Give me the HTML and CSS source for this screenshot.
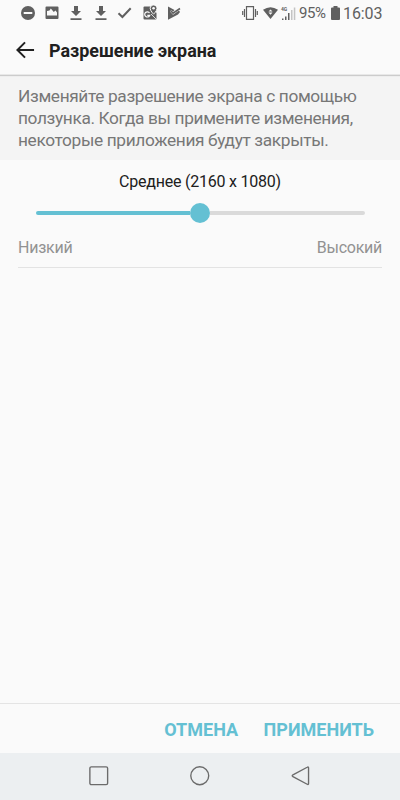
FILE: index.html
```html
<!DOCTYPE html>
<html lang="ru">
<head>
<meta charset="utf-8">
<title>Разрешение экрана</title>
<link rel="stylesheet" href="styles.css">
</head>
<body>
<div class="screen">
  <div class="status">
    <div class="notifications">
      <svg viewBox="0 0 24 24"><circle cx="12" cy="12" r="7"/><path class="cut" d="M7.7 11h8.6v2H7.7z"/></svg>
      <svg viewBox="0 0 24 24"><path fill-rule="evenodd" d="M6.500 5.500h11q1 0 1 1V17q0 1-1 1h-11q-1 0-1-1V6.500q0-1 1-1zM7 14.500h10v-3l-1.500-2-1.700 1.400-3-3.400-1.300 2-2.500.500z"/></svg>
      <svg viewBox="0 0 24 24"><path d="M10 5h4v5h3L12 15 7 10h3zM6.500 17.200h11v1.700h-11z"/></svg>
      <svg viewBox="0 0 24 24"><path d="M10 5h4v5h3L12 15 7 10h3zM6.500 17.200h11v1.700h-11z"/></svg>
      <svg viewBox="0 0 24 24"><path class="check" d="m5.500 12.200 3.900 3.800 8.300-8.800"/></svg>
      <svg viewBox="0 0 24 24"><path d="M6.500 5.500h7L18.500 12v5.500q0 1-1 1h-11q-1 0-1-1v-11q0-1 1-1z"/><path class="road" d="m13 13 5 5"/><path class="pin" d="M15.600 4c-2 0-3.400 1.500-3.400 3.400 0 2.400 3.400 5.800 3.400 5.800S19 9.800 19 7.400C19 5.500 17.600 4 15.600 4z"/><circle class="cut" cx="15.600" cy="7.300" r="1.300"/><path class="g" d="M11.500 12a2.600 2.600 0 1 0 .2 2.400H9.300"/></svg>
      <svg viewBox="0 0 24 24"><path d="M6 5.500 12.500 9 11 10.700 9.500 9 8 10.500l3 3.300L17 9.500l1 1.500-2 2.500L6 18.800z"/><path class="playmark" d="m8.800 9.800 2.200 2.400 7-4.700"/></svg>
    </div>
    <div class="system">
      <svg class="vibrate" viewBox="0 0 16 14"><path d="M4.500.7h7v12.600h-7zM2.500 3v8M13.500 3v8M.7 5v4M15.300 5v4"/></svg>
      <svg class="wifi" viewBox="0 0 15 12"><path d="M0 2.800Q7.500-2.300 15 2.800L7.500 12z"/><path class="cut" d="m7.500 2.500 2 2.100h-4zM5.500 5.600h4l-2 2.100z"/></svg>
      <svg class="signal" viewBox="0 0 15 15"><text x="0" y="4.500">4G</text><path d="M1 12.500h1.500v1.500H1zM4 10.500h1.500V14H4zM7 7h1.500v7H7z"/><path class="weak" d="M10 4h1.500v10H10zM12.800 1.500h1.500V14h-1.500z"/></svg>
      <span class="percent">95%</span>
      <svg class="battery" viewBox="0 0 9 14"><path d="M2.500 0h4v1.500H8q1 0 1 1V13q0 1-1 1H1q-1 0-1-1V2.500q0-1 1-1h1.500z"/></svg>
      <span class="clock">16:03</span>
    </div>
  </div>
  <header class="header">
    <svg class="back" viewBox="0 0 20 18"><path d="M19 9H1.500M9.500 1 1.500 9l8 8"/></svg>
    <h1>Разрешение экрана</h1>
  </header>
  <p class="hint"><span>Изменяйте разрешение экрана с помощью</span><br><span>ползунка. Когда вы примените изменения,</span><br><span>некоторые приложения будут закрыты.</span></p>
  <main class="setting">
    <div class="value">Среднее (2160 x 1080)</div>
    <div class="slider"><div class="filled"></div><div class="thumb"></div><div class="rest"></div></div>
    <div class="labels"><span>Низкий</span><span>Высокий</span></div>
  </main>
  <footer class="actions"><span class="cancel">ОТМЕНА</span><span class="apply">ПРИМЕНИТЬ</span></footer>
  <nav class="nav">
    <svg viewBox="0 0 20 20"><rect x=".9" y=".9" width="18.200" height="18.200" rx="1.500"/></svg>
    <svg viewBox="0 0 20 20"><circle cx="10" cy="10" r="9.200"/></svg>
    <svg viewBox="0 0 20 20"><path d="M18 2v16q0 1.500-1.400.7L2 11q-1.500-1 0-2L16.600 1.300Q18 .5 18 2z"/></svg>
  </nav>
</div>
</body>
</html>
```

FILE: styles.css
```css
* { box-sizing: border-box; }
body { margin: 0; font-family: Roboto, "Liberation Sans", sans-serif; background: #fafafa; }
.screen { width: 400px; height: 800px; display: flex; flex-direction: column; overflow: hidden; background: #fafafa; }
svg { display: block; flex: none; overflow: visible; }

.status { height: 26px; flex: none; display: flex; justify-content: space-between; align-items: center; padding: 0 18px 0 15.700px; color: #606060; }
.notifications { display: flex; gap: .4px; fill: #606060; }
.notifications svg { width: 24px; height: 24px; }
.cut { fill: #fafafa; }
.check { fill: none; stroke: #606060; stroke-width: 2; }
.road { fill: none; stroke: #fafafa; stroke-width: .8; }
.pin { stroke: #fafafa; stroke-width: 1; }
.g { fill: none; stroke: #fafafa; stroke-width: 1.2; }
.playmark { fill: none; stroke: #606060; stroke-width: 1.600; }
.system { display: flex; align-items: center; fill: #606060; }
.vibrate { width: 16px; height: 14px; fill: none; stroke: #606060; stroke-width: 1.200; }
.wifi { width: 15px; height: 12px; margin-left: 5px; }
.signal { width: 15px; height: 15px; margin-left: 3px; }
.signal text { font-size: 5px; font-weight: 700; }
.weak { fill: #c4c4c4; }
.percent { width: 27px; margin-left: 3px; font-size: 15px; line-height: 18px; letter-spacing: -.4px; }
.battery { width: 9px; height: 14px; margin-left: 5px; }
.clock { width: 39px; margin-left: 3px; font-size: 16px; line-height: 18px; letter-spacing: -.1px; padding-top: 1px; }

.header { height: 49px; flex: none; display: flex; align-items: center; padding-left: 16px; position: relative; border-bottom: 1px solid #e8e8e8; box-shadow: 0 1px 1px #ccc; color: #202020; }
.back { width: 19px; height: 18px; fill: none; stroke: #202020; stroke-width: 2.100; }
h1 { margin: 2px 0 0 14px; font-size: 17.900px; line-height: 24px; font-weight: 700; white-space: nowrap; }

.hint { height: 85px; flex: none; margin: 0; padding: 10px 18px 0; background: #f4f4f4; color: #777; font-size: 17.300px; line-height: 22px; letter-spacing: -.36px; white-space: nowrap; }
.setting { flex: none; height: 108px; margin: 0 18px; border-bottom: 1px solid #e3e3e3; }
.value { padding-top: 12px; line-height: 20px; font-size: 16px; letter-spacing: -.22px; text-align: center; color: #202020; }
.slider { height: 20px; margin: 11px 17.300px 0 18px; display: flex; align-items: center; }
.filled, .rest { height: 4px; flex: 1; }
.filled { background: #64c0d3; border-radius: 2px 0 0 2px; }
.rest { background: #dadada; border-radius: 0 2px 2px 0; }
.thumb { width: 20px; height: 20px; border-radius: 50%; background: #64c0d3; }
.labels { display: flex; justify-content: space-between; margin-top: 15px; font-size: 16px; letter-spacing: -.25px; line-height: 20px; color: #929292; }

.actions { height: 50px; flex: none; margin-top: auto; display: flex; justify-content: flex-end; align-items: center; padding: 2px 26px 0 0; gap: 25.500px; border-top: 1px solid #e4e4e4; color: #64c0d3; font-size: 18px; line-height: 24px; font-weight: 700; }
.nav { height: 47px; flex: none; display: flex; justify-content: center; align-items: center; gap: 81.500px; padding: 0 0 1px; background: #eceff1; }
.nav svg { width: 19.500px; height: 19.500px; fill: none; stroke: #6b6b6b; stroke-width: 1.400; }
```
